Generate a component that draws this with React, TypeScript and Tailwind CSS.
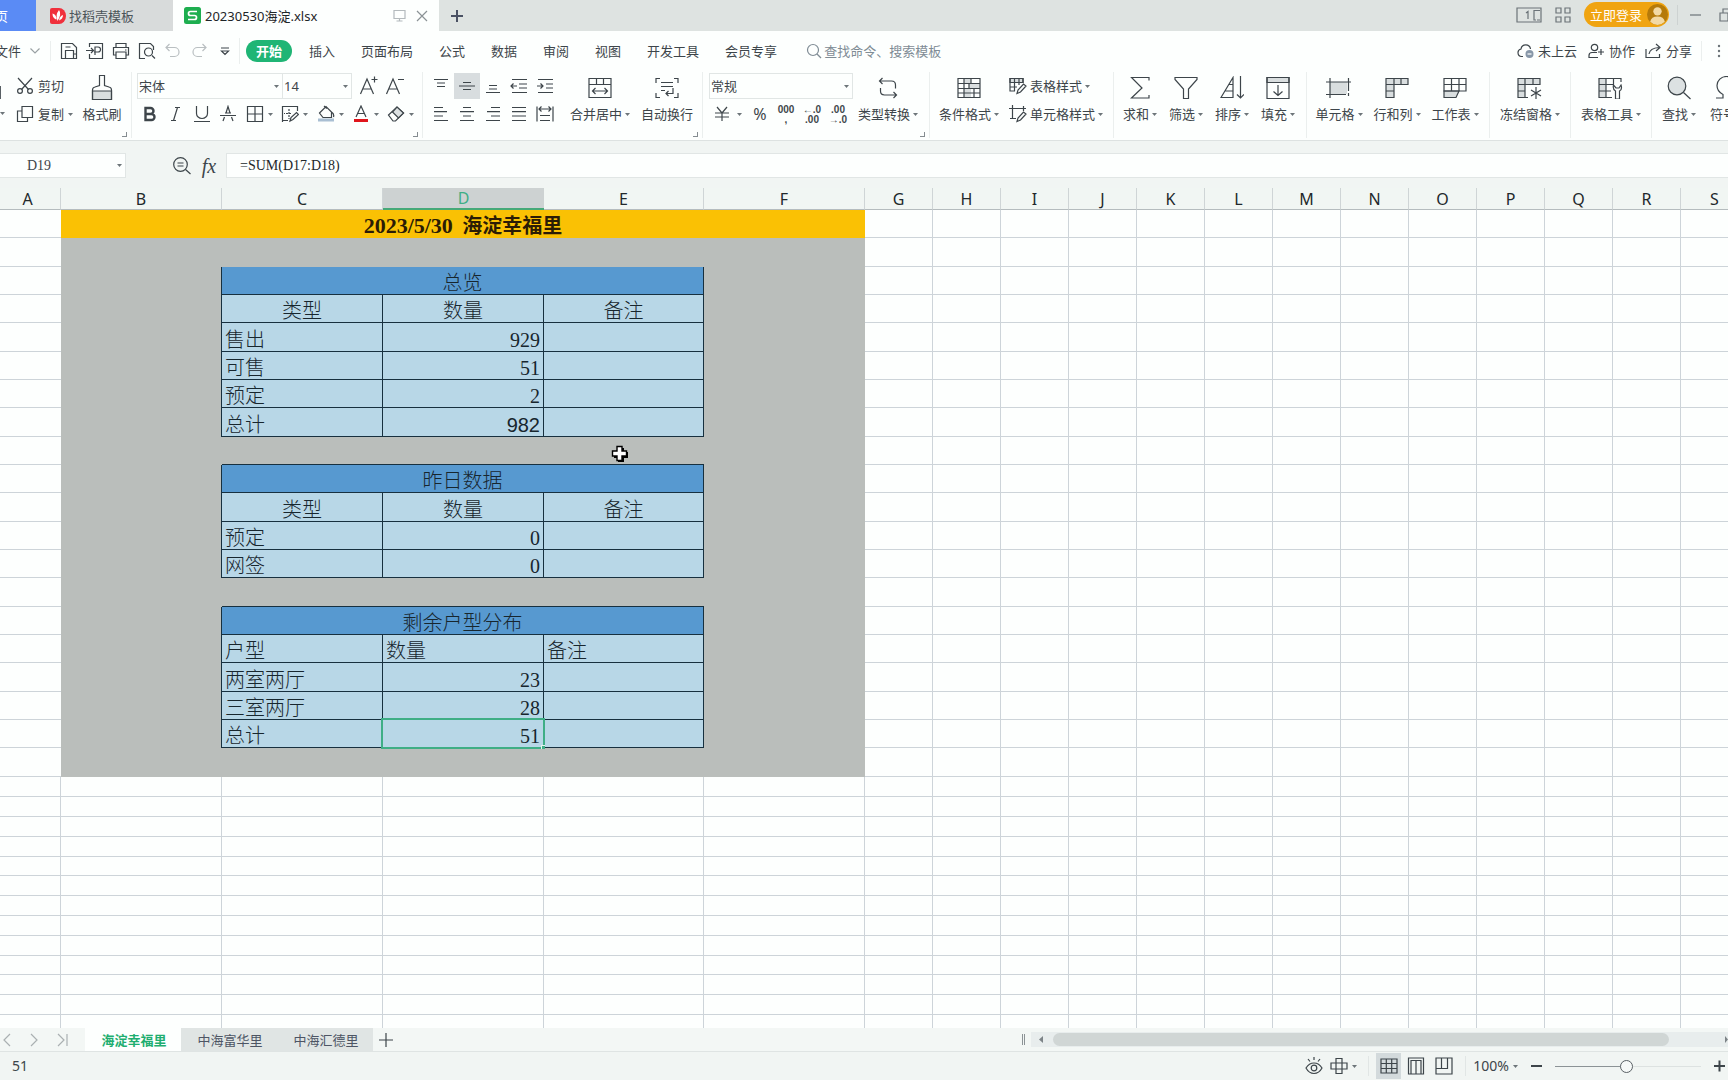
import {useState, type ReactNode} from 'react';
import clsx from 'clsx';

const UI = "font-['Noto_Sans','Noto_Sans_CJK_SC',sans-serif]";
const SONG = "font-['Liberation_Serif','Noto_Sans_CJK_SC',serif]";

function Icon({w = 18, h = 18, children, className}: {w?: number; h?: number; children: ReactNode; className?: string}) {
  return (
    <svg
      width={w}
      height={h}
      viewBox={`0 0 ${w} ${h}`}
      fill="none"
      stroke="currentColor"
      strokeWidth="1.2"
      className={clsx('shrink-0', className)}
      aria-hidden="true"
    >
      {children}
    </svg>
  );
}

const Caret = () => (
  <svg width="5" height="3" viewBox="0 0 5 3" className="shrink-0 fill-[#6d7579]" aria-hidden="true">
    <path d="M0 0h5L2.5 3z" />
  </svg>
);

const icons = {
  save: <Icon><path d="M1.500 1.500h11l4 4v11h-15zM5.500 16V8.500h8V16M5.500 5h5M13.500 12h3" /></Icon>,
  exportPdf: <Icon><path d="M3.500 5V1.500h13v15h-13V12M0 8.500h7M5 6l2.500 2.500L5 11M9 13V5h3a2 2 0 0 1 0 5H8" /></Icon>,
  print: <Icon><path d="M4 5.500v-4h10v4M4 13H1.500V5.500h15V13H14M4 10h10v6.500H4zM13 8h1.500" /></Icon>,
  preview: <Icon><path d="M7 16.500H1.500v-15h11l3 3V8M14 13.500l3 3" /><circle cx="10.500" cy="10" r="4" /></Icon>,
  undo: <Icon><path d="M5.500 2L2 5.500 5.500 9M2 5.500h8.500a4.500 4.500 0 0 1 0 9H6" /></Icon>,
  redo: <Icon><path d="M12.500 2L16 5.500 12.500 9M16 5.500H7.500a4.500 4.500 0 0 0 0 9H12" /></Icon>,
  more: <Icon w={10} h={10}><path d="M1 2h8M1.500 5h7L5 8.500z" /></Icon>,
  cut: <Icon><path d="M2 1l10.500 11.500M16 1L5.500 12.500" /><circle cx="4" cy="14" r="2.400" /><circle cx="14" cy="14" r="2.400" /></Icon>,
  copy: <Icon><path d="M6 1.500h10.500v11H6zM6 6H1.500v10.500h10v-4" /></Icon>,
  brush: (
    <Icon w={22} h={26}>
      <path d="M1.500 16h19v8.500h-19z" fill="#d9dedf" />
      <path d="M1.500 24.500V15q0-2.500 2.500-3l4.500-1.500v-10h5v10L18 12q2.500.500 2.500 3v9.500z" />
    </Icon>
  ),
  fontUp: <Icon w={20} h={20}><path d="M1.500 18L8 3l6.500 15M4 13h8M12.500 3.500h6M15.500.500v6" /></Icon>,
  fontDown: <Icon w={20} h={20}><path d="M1.500 18L8 3l6.500 15M4 13h8M13 3.500h6" /></Icon>,
  bold: <Icon w={14} h={16}><path d="M2.500 2h5a3 3 0 0 1 0 6h-5zM2.500 8h6a3 3 0 0 1 0 6h-6z" strokeWidth="2.400" /></Icon>,
  italic: <Icon w={12} h={16}><path d="M5 1.500h5M1 14.500h5M7.500 1.500l-4 13" /></Icon>,
  underline: <Icon w={16} h={18}><path d="M2.500 1v7.500a5.500 5 0 0 0 11 0V1M0 16.500h16" /></Icon>,
  strike: <Icon w={16} h={18}><path d="M3 16l1.500-4M6 8L8 1.500 10 8M11.500 12l1.500 4M0 10.500h16M5 8h6" /></Icon>,
  border: <Icon><path d="M1.500 1.500h15v15h-15zM9 1.500v15M1.500 9h15" /></Icon>,
  drawBorder: <Icon><path d="M7 15.500H1.500v-14h15V6M1.500 15.500v1.500" /><path d="M5 8.500h6M8 4v8M3 8.500h1M8 13v1" strokeDasharray="2 1" /><path d="M9 16l1-3.500 5.500-5 2 2-5.500 5z" /></Icon>,
  fill: <Icon><path d="M1 13.500h16v3H1z" fill="#a9bfd3" stroke="none" /><path d="M2.500 8L9 1.500 14.500 7v5.500H6zM7 1l3 2.500M14.500 7q3 2 2 5" /></Icon>,
  fontColor: <Icon><path d="M4 12L9 1l5 11M6 8.500h6" /><path d="M2 14h14v3H2z" fill="#e0161c" stroke="none" /></Icon>,
  eraser: <Icon><path d="M1.500 10L10 2l6.500 6-8 8H6z" /><path d="M5.500 7l6 6 5-5L10 2z" fill="#dce1e2" /></Icon>,
  top: <Icon w={16}><path d="M1 2.500h14M4 6h8M4 9.500h8" /></Icon>,
  middle: <Icon w={16}><path d="M4 5.500h8M0 9h16M4 12.500h8" /></Icon>,
  bottom: <Icon w={16}><path d="M4 8.500h8M4 12h8M1 15.500h14" /></Icon>,
  outdent: <Icon><path d="M2 2.500h15M9 7h8M9 11h8M2 15.500h15M7 9H1M3.500 6.500L1 9l2.500 2.500" /></Icon>,
  indent: <Icon><path d="M2 2.500h15M10 7h7M10 11h7M2 15.500h15M1 9h6M4.500 6.500L7 9l-2.500 2.500" /></Icon>,
  left: <Icon w={16}><path d="M1 2.500h9M1 6.700h13M1 11h9M1 15.500h14" /></Icon>,
  center: <Icon w={16}><path d="M4 2.500h8M1 6.700h14M4 11h8M1 15.500h14" /></Icon>,
  right: <Icon w={16}><path d="M6 2.500h9M2 6.700h13M6 11h9M1 15.500h14" /></Icon>,
  justify: <Icon w={16}><path d="M1 2.500h14M1 6.700h14M1 11h14M1 15.500h14" /></Icon>,
  distribute: <Icon><path d="M1 1.500v15M17 1.500v15M3 4h12M5.500 1.500L3 4l2.500 2.500M12.500 1.500L15 4l-2.500 2.500M4 10.500h10M4 15.500h10" /></Icon>,
  merge: <Icon w={24} h={22}><path d="M1 1.500h22v19H1zM1 7.500h22M8.500 1.500v6M15.500 1.500v6M4.500 14h15M7.500 11l-3 3 3 3M16.500 11l3 3-3 3" /></Icon>,
  wrap: <Icon w={24} h={22}><path d="M5 1.500H1V6M19 1.500h4V6M5 20.500H1V16M19 20.500h4V16M6 5.500h12M6 9.500h12M6 13.500h4M18 11v5.500h-7M13.500 14L11 16.500l2.500 2.500" /></Icon>,
  convert: <Icon w={20} h={22}><path d="M4.500 1L1.500 4l3 3M1.500 4h12q4 0 4 4v3.500M15.500 21l3-3-3-3M18.500 18h-12q-4 0-4-4v-3" /></Icon>,
  condition: (
    <Icon w={24} h={22}>
      <path d="M7 1.500h7v5H7zM12 6.500h11v5H12zM7 11.500h7v9H7z" fill="#d9dedf" stroke="none" />
      <path d="M1 1.500h22v19H1zM1 6.500h22M1 11.500h22M1 16h22M7 1.500v19M14 1.500v5M12 6.500v5M17 11.500v9" />
    </Icon>
  ),
  tableStyle: <Icon><path d="M1 1.500h13v4H1z" fill="#d9dedf" /><path d="M6 14H1V1.500h13V6M1 5.500h13M1 10h7M5.500 1.500V14M10 1.500V8M8 16.500l1-3.500 5.500-6 2.500 2-5.500 6z" /></Icon>,
  cellStyle: <Icon><path d="M3.500 0v14M0 3.500h17M14.500 1v5M1 13.500h6M8 16.500l1-3.500 5.500-6 2.500 2-5.500 6z" /></Icon>,
  sum: <Icon w={20} h={22}><path d="M19 3.500v-3H1.500L12 11 1.500 21H19v-3" /></Icon>,
  filter: <Icon w={24} h={24}><path d="M1 1.500h22v2L14.500 13v9.500h-5V13L1 3.500z" /></Icon>,
  sort: <Icon w={24} h={24}><path d="M1 21.500L13 1.500v20zM9 8.500h4M5.500 15h7.500" /><path d="M20.500 0v22M17 18.500l3.500 3.500 3.500-3.500" /></Icon>,
  fillDown: <Icon w={24} h={24}><path d="M1 1.500h22v5H1z" fill="#d9dedf" /><path d="M1 1.500h22v21H1zM12 9v10.500M7.500 15.500l4.500 4 4.500-4" /></Icon>,
  cell: <Icon w={26} h={22}><path d="M4 5h17v12H4z" fill="#d9dedf" stroke="none" /><path d="M4 1v20M0 5h25M22.500 1v13M0 17.500h20M22.500 16v3" /></Icon>,
  rowCol: <Icon w={24} h={22}><path d="M1 1.500h22v6H9v13H1z" fill="#d9dedf" /><path d="M9 1.500v6M16 1.500v6M1 7.500h8M1 14h8" /></Icon>,
  sheet: <Icon w={24} h={22}><path d="M1 14h15l-3 6.500H1z" fill="#d9dedf" /><path d="M1 1.500h22V14H1zM8.500 1.500V14M16 1.500V14M1 7.500h22" /></Icon>,
  freeze: (
    <Icon w={26} h={22}>
      <path d="M1 1.500h22v6H8v13H1z" fill="#d9dedf" />
      <path d="M8 1.500v6M16 1.500v6M1 7.500h7M1 14h7M8 20.500h3M19 10v12M14 13l10 6M24 13l-10 6" />
    </Icon>
  ),
  tools: <Icon w={26} h={22}><path d="M1 1.500h7v19H1z" fill="#d9dedf" stroke="none" /><path d="M14 20.500H1v-19h22V5M1 7.500h14M1 14h12M8 1.500v19M15.500 1.500V8M17.500 22v-8q-3-1.500-2-6l2.500 3h3l2-3q1.500 4.500-1.500 6v8z" /></Icon>,
  find: <Icon w={24} h={24}><circle cx="10" cy="10" r="8.800" fill="#dce1e2" /><path d="M16.500 16.500l7 6.500" /></Icon>,
  symbol: <Icon w={24} h={24}><path d="M1 22h7v-3.500q-6-3-6-9a9.500 9 0 0 1 19 0q0 6-6 9V22h7" /></Icon>,
};

function IconButton({name, label, caret, active, className}: {name: keyof typeof icons; label: string; caret?: boolean; active?: boolean; className?: string}) {
  return (
    <button
      type="button"
      aria-label={label}
      className={clsx('flex h-[26px] shrink-0 items-center justify-center gap-1', active && 'bg-[#d8dddf]', className ?? 'w-[26px]')}
    >
      {icons[name]}
      {caret && <Caret />}
    </button>
  );
}

function BigButton({name, label, caret = true, className}: {name: keyof typeof icons; label: string; caret?: boolean; className: string}) {
  return (
    <button type="button" className={clsx('flex shrink-0 flex-col items-center', className)}>
      <span className="flex h-[30px] items-center">{icons[name]}</span>
      <span className="flex h-[22px] items-center gap-[3px] whitespace-nowrap">
        {label}
        {caret && <Caret />}
      </span>
    </button>
  );
}

function Group({className, corner, children}: {className: string; corner?: boolean; children: ReactNode}) {
  return (
    <div className={clsx('relative flex h-[66px] shrink-0 border-r border-[#ebefee] pt-px', className)}>
      {children}
      {corner && <span className="absolute right-1 bottom-px size-[5px] border-r border-b border-[#858c90]" />}
    </div>
  );
}

function Picker({label, options, className}: {label: string; options: string[]; className: string}) {
  return (
    <label className={clsx('relative flex h-[26px] items-center border border-[#e1e6e5]', className)}>
      <select aria-label={label} className="size-full appearance-none pl-px outline-none">
        {options.map((o) => (
          <option key={o}>{o}</option>
        ))}
      </select>
      <span className="pointer-events-none absolute right-[3px] flex">
        <Caret />
      </span>
    </label>
  );
}

function TitleBar() {
  return (
    <div className="flex h-[31px] shrink-0 items-center bg-[#dee3e1] text-[#4b5459]">
      <button type="button" className="flex h-full w-9 shrink-0 items-center justify-end overflow-hidden bg-[#5a8bf5] pr-7 whitespace-nowrap text-white">
        首页
      </button>
      <button type="button" className="flex h-full w-[137px] shrink-0 items-center gap-[3px] bg-[#d8dbdb] pl-[14px]">
        <svg width="16" height="16" viewBox="0 0 16 16" aria-hidden="true">
          <path d="M2 0h7a7 8 0 0 1 0 16H2q-2 0-2-2V2q0-2 2-2z" fill="#f0303c" />
          <path d="M6 11.500Q2.500 10 2.500 5.500q4 1 4 6zM7.500 13Q5 7 9 2q3 4-1.500 11zM9 12.500q.500-4.500 4-5.500 0 4-4 5.500z" fill="#fff" />
        </svg>
        找稻壳模板
      </button>
      <div className="flex h-full w-[266px] shrink-0 items-center bg-[#fdfffe] pl-[11px] text-[#1e2528]">
        <svg width="17" height="17" viewBox="0 0 17 17" aria-hidden="true">
          <rect width="17" height="17" rx="2.500" fill="#1dae4f" />
          <path d="M13 4.500H6.500a2 2 0 0 0 0 4h4a2 2 0 0 1 0 4H4" fill="none" stroke="#fff" strokeWidth="1.700" />
        </svg>
        <span className="ml-1 flex-1 whitespace-nowrap">20230530海淀.xlsx</span>
        <Icon w={13} h={13} className="mr-[10px] text-[#b4babd]"><path d="M1 1.500h11v8H1zM3.500 12h6M6.500 9.500V12" /></Icon>
        <button type="button" aria-label="关闭" className="mr-[11px] text-[#8b9296]">
          <Icon w={12} h={12}><path d="M1 1l10 10M11 1L1 11" /></Icon>
        </button>
      </div>
      <button type="button" aria-label="新建" className="ml-3 text-[#4a5163]">
        <Icon w={12} h={12}><path d="M6 0v12M0 6h12" strokeWidth="2" /></Icon>
      </button>
      <div className="ml-auto flex h-full shrink-0 items-center pb-[2px] text-[#6b7378]">
        <Icon w={26} h={16}><path d="M1 1h24v14H1zM10 6l2-1.500V12M24 3.500h-6V13h2M24 13h-3" /></Icon>
        <Icon w={16} h={16} className="ml-[13px]"><path d="M1 1h5v5H1zM10 1h5v5h-5zM1 10h5v5H1zM10 10h5v5h-5z" /></Icon>
        <button type="button" className="ml-[13px] flex h-[25px] w-[85px] items-center gap-[5px] rounded-full bg-[#f0a411] pl-[6px] whitespace-nowrap text-white">
          立即登录
          <svg width="21" height="21" viewBox="0 0 20 20" aria-hidden="true">
            <circle cx="10" cy="10" r="10" fill="#b57a0a" />
            <circle cx="10" cy="7" r="4" fill="#f3d9a4" />
            <path d="M3 17q1-5 7-5t7 5q-3 3-7 3t-7-3z" fill="#f3d9a4" />
          </svg>
        </button>
        <span className="ml-2 h-5 w-px bg-[#cdd2d1]" />
        <button type="button" aria-label="最小化" className="ml-3">
          <Icon w={12} h={12}><path d="M0 6h11" /></Icon>
        </button>
        <button type="button" aria-label="还原" className="ml-[17px] w-[9px] overflow-hidden">
          <Icon w={14} h={14}><path d="M1 5h8v8H1zM4 5V1h9v8H9" /></Icon>
        </button>
      </div>
    </div>
  );
}

const MENU = ['插入', '页面布局', '公式', '数据', '审阅', '视图', '开发工具', '会员专享'];

function MenuBar() {
  return (
    <div className="flex h-[41px] shrink-0 items-center pb-[2px]">
      <button type="button" className="flex w-[51px] shrink-0 items-center justify-end gap-[9px] overflow-hidden border-r border-[#ebefee] pr-[10px] whitespace-nowrap">
        文件
        <Icon w={10} h={6} className="text-[#9aa1a4]"><path d="M.500 .500L5 5 9.500 .500" /></Icon>
      </button>
      <div className="flex w-[189px] shrink-0 items-center border-r border-[#ebefee] pl-[5px]">
        <IconButton name="save" label="保存" />
        <IconButton name="exportPdf" label="输出为PDF" />
        <IconButton name="print" label="打印" />
        <IconButton name="preview" label="打印预览" />
        <IconButton name="undo" label="撤销" className="w-[26px] text-[#b9bfc1]" />
        <IconButton name="redo" label="恢复" className="w-[26px] text-[#b9bfc1]" />
        <IconButton name="more" label="自定义快速访问" />
      </div>
      <button type="button" className="ml-[6px] h-[22px] w-[46px] shrink-0 rounded-full bg-[#1fb575] leading-[22px] font-bold text-white">开始</button>
      <nav className="ml-[17px] flex shrink-0 gap-[26px]">
        {MENU.map((m) => (
          <button type="button" key={m}>{m}</button>
        ))}
      </nav>
      <label className="ml-[29px] flex items-center gap-[2px] text-[#7f8c95]">
        <Icon w={16} h={16}><circle cx="7" cy="7" r="5.500" /><path d="M11 11l4 4" /></Icon>
        <input placeholder="查找命令、搜索模板" className="w-40 outline-none placeholder:text-[#7f8c95]" />
      </label>
      <div className="ml-auto flex shrink-0 items-center">
        <button type="button" className="flex items-center gap-1">
          <Icon w={17} h={16}><path d="M6 13.500H4.500a3.800 3.800 0 0 1-.500-7.500 4.800 4.800 0 0 1 9.500 0" /><circle cx="12.500" cy="11" r="4" fill="#8797a8" stroke="none" /><path d="M10.500 11h4" stroke="#fff" /></Icon>
          未上云
        </button>
        <button type="button" className="ml-[11px] flex items-center gap-[5px]">
          <Icon w={16} h={16}><circle cx="6.500" cy="4.500" r="3.200" /><path d="M10 14.500H1v-2q0-3 3-3h5M13 6v6M10 9h6" /></Icon>
          协作
        </button>
        <button type="button" className="ml-[10px] flex items-center gap-[5px]">
          <Icon w={16} h={16}><path d="M1 6v8.500h13.500V11M4 11q1-6 10-6.500M11 1l4 3.500L11 8" /></Icon>
          分享
        </button>
        <span className="ml-[9px] h-5 w-px bg-[#ebefee]" />
        <button type="button" aria-label="更多" className="mr-[7px] ml-[15px]">
          <svg width="4" height="14" className="fill-[#6b7378]" aria-hidden="true">
            <circle cx="2" cy="2" r="1.200" /><circle cx="2" cy="7" r="1.200" /><circle cx="2" cy="12" r="1.200" />
          </svg>
        </button>
      </div>
    </div>
  );
}

const DECIMAL = "w-[26px] pt-px text-center font-['Liberation_Sans',sans-serif] text-[10px] leading-[10px] font-bold whitespace-nowrap";

function Ribbon() {
  return (
    <div className="flex h-[69px] shrink-0 overflow-hidden border-b border-[#dde2e1]">
      <Group className="w-[132px]" corner>
        <button type="button" aria-label="粘贴" className="flex w-[16px] flex-col">
          <span className="mt-[13px] h-[13px] w-px bg-[#596065]" />
          <span className="mt-[13px] flex"><Caret /></span>
        </button>
        <div className="flex w-[60px] flex-col gap-[2px]">
          <button type="button" className="flex h-[26px] items-center gap-1 whitespace-nowrap">{icons.cut}剪切</button>
          <button type="button" className="flex h-[26px] items-center gap-1 whitespace-nowrap">{icons.copy}复制<Caret /></button>
        </div>
        <BigButton name="brush" label="格式刷" caret={false} className="w-[52px]" />
      </Group>

      <Group className="w-[291px] flex-col gap-[2px] pl-[5px]" corner>
        <div className="flex items-center">
          <Picker label="字体" options={['宋体', '黑体', '楷体']} className="w-[146px]" />
          <Picker label="字号" options={['14', '12', '11', '10']} className="w-[69px] border-l-0" />
          <IconButton name="fontUp" label="增大字号" className="ml-1 w-[26px]" />
          <IconButton name="fontDown" label="减小字号" />
        </div>
        <div className="flex">
          <IconButton name="bold" label="加粗" />
          <IconButton name="italic" label="倾斜" />
          <IconButton name="underline" label="下划线" />
          <IconButton name="strike" label="删除线" />
          <IconButton name="border" label="边框" caret className="w-9" />
          <IconButton name="drawBorder" label="绘图边框" caret className="w-[35px]" />
          <IconButton name="fill" label="填充颜色" caret className="w-9" />
          <IconButton name="fontColor" label="字体颜色" caret className="w-[35px]" />
          <IconButton name="eraser" label="清除" caret className="w-[35px]" />
        </div>
      </Group>

      <Group className="w-[280px] pl-[5px]" corner>
        <div className="flex w-[137px] flex-col gap-[2px]">
          <div className="flex">
            <IconButton name="top" label="顶端对齐" />
            <IconButton name="middle" label="垂直居中" active />
            <IconButton name="bottom" label="底端对齐" />
            <IconButton name="outdent" label="减少缩进量" />
            <IconButton name="indent" label="增加缩进量" />
          </div>
          <div className="flex">
            <IconButton name="left" label="左对齐" />
            <IconButton name="center" label="水平居中" />
            <IconButton name="right" label="右对齐" />
            <IconButton name="justify" label="两端对齐" />
            <IconButton name="distribute" label="分散对齐" />
          </div>
        </div>
        <BigButton name="merge" label="合并居中" className="w-[70px]" />
        <BigButton name="wrap" label="自动换行" caret={false} className="w-[64px]" />
      </Group>

      <Group className="w-[227px] pl-[6px]" corner>
        <div className="flex w-[144px] flex-col gap-[2px]">
          <Picker label="数字格式" options={['常规', '数值', '货币', '日期']} className="w-full" />
          <div className="flex h-[26px] items-center text-[#3f474b]">
            <button type="button" aria-label="货币" className="flex w-[38px] items-center justify-center gap-2">
              <Icon w={14} h={16}><path d="M2 1l5 6 5-6M0 7h14M0 11h14M7 7v8" /></Icon>
              <Caret />
            </button>
            <button type="button" aria-label="百分比" className="flex w-[26px] items-center justify-center text-base">%</button>
            <button type="button" aria-label="千位分隔" className={DECIMAL}>000<br />,</button>
            <button type="button" aria-label="增加小数位数" className={DECIMAL}>←.0<br />.00</button>
            <button type="button" aria-label="减少小数位数" className={DECIMAL}>.00<br />→.0</button>
          </div>
        </div>
        <BigButton name="convert" label="类型转换" className="w-[70px]" />
      </Group>

      <Group className="w-[184px] pl-[3px]">
        <BigButton name="condition" label="条件格式" className="w-[72px]" />
        <div className="ml-[4px] flex flex-col gap-[2px]">
          <button type="button" className="flex h-[26px] items-center gap-[3px] whitespace-nowrap">{icons.tableStyle}表格样式<Caret /></button>
          <button type="button" className="flex h-[26px] items-center gap-[3px] whitespace-nowrap">{icons.cellStyle}单元格样式<Caret /></button>
        </div>
      </Group>

      <Group className="w-[193px] pl-[3px]">
        <BigButton name="sum" label="求和" className="w-[46px]" />
        <BigButton name="filter" label="筛选" className="w-[46px]" />
        <BigButton name="sort" label="排序" className="w-[46px]" />
        <BigButton name="fillDown" label="填充" className="w-[46px]" />
      </Group>

      <Group className="w-[183px] pl-[3px]">
        <BigButton name="cell" label="单元格" className="w-[58px]" />
        <BigButton name="rowCol" label="行和列" className="w-[58px]" />
        <BigButton name="sheet" label="工作表" className="w-[58px]" />
      </Group>

      <Group className="w-[81px] pl-[4px]">
        <BigButton name="freeze" label="冻结窗格" className="w-[72px]" />
      </Group>
      <Group className="w-[81px] pl-[4px]">
        <BigButton name="tools" label="表格工具" className="w-[72px]" />
      </Group>
      <div className="flex pt-px pl-[4px]">
        <BigButton name="find" label="查找" className="w-[46px]" />
        <BigButton name="symbol" label="符号" className="w-[50px]" />
      </div>
    </div>
  );
}

function FormulaBar() {
  return (
    <div className="flex h-[47px] shrink-0 items-center bg-[#f1f5f3] pt-[2px]">
      <div className="flex h-[25px] w-[126px] shrink-0 items-center border border-l-0 border-[#e1e6e5] bg-[#fdfffe] pr-[3px]">
        <input aria-label="名称框" defaultValue="D19" className={clsx(SONG, 'w-20 flex-1 pl-[27px] text-sm outline-none')} />
        <Caret />
      </div>
      <Icon w={19} h={19} className="ml-[46px]"><circle cx="8.500" cy="8.500" r="6.800" /><path d="M13.500 13.500l5 4.500M5.500 7h6M5.500 10h6" /></Icon>
      <button type="button" aria-label="插入函数" className="ml-[9px] w-[18px] font-['Liberation_Serif',serif] text-xl leading-6 italic">fx</button>
      <input
        aria-label="编辑栏"
        defaultValue="=SUM(D17:D18)"
        className={clsx(SONG, 'ml-2 h-[25px] min-w-0 flex-1 border border-r-0 border-[#e1e6e5] bg-[#fdfffe] pl-[13px] text-sm text-[#22282b] outline-none')}
      />
    </div>
  );
}

type Row =
  | {kind: 'title' | 'gap' | 'lastGap'}
  | {kind: 'band'; text: string}
  | {kind: 'head'; cells: string[]; start?: boolean}
  | {kind: 'data'; name: string; value: number; plain?: boolean; active?: boolean};

const ROWS: Row[] = [
  {kind: 'title'},
  {kind: 'lastGap'},
  {kind: 'band', text: '总览'},
  {kind: 'head', cells: ['类型', '数量', '备注']},
  {kind: 'data', name: '售出', value: 929},
  {kind: 'data', name: '可售', value: 51},
  {kind: 'data', name: '预定', value: 2},
  {kind: 'data', name: '总计', value: 982, plain: true},
  {kind: 'gap'},
  {kind: 'band', text: '昨日数据'},
  {kind: 'head', cells: ['类型', '数量', '备注']},
  {kind: 'data', name: '预定', value: 0},
  {kind: 'data', name: '网签', value: 0},
  {kind: 'gap'},
  {kind: 'band', text: '剩余户型分布'},
  {kind: 'head', cells: ['户型', '数量', '备注'], start: true},
  {kind: 'data', name: '两室两厅', value: 23},
  {kind: 'data', name: '三室两厅', value: 28},
  {kind: 'data', name: '总计', value: 51, active: true},
  {kind: 'lastGap'},
];

const REST = 'GHIJKLMNOPQRS'.split('');
const COLS = ['A', 'B', 'C', 'D', 'E', 'F', ...REST];
const COL_WIDTHS = ['w-[61px]', 'w-[161px]', 'w-[161px]', 'w-[161px]', 'w-[160px]', 'w-[161px]'];

const LINE = 'border-r border-b border-[#cdd4d9]';
const GRAY = 'bg-[#babebb]';
const TEXT = 'align-bottom leading-[22px] font-light';
const BOX = 'border-r border-b border-[#17303f] bg-[#b8d7e7]';

function rowCells(row: Row) {
  switch (row.kind) {
    case 'title':
      return (
        <td colSpan={5} className="bg-[#fac104] text-center align-bottom leading-6 font-bold text-[#2b1c05]">
          <span className="mr-1 text-[22px] leading-6">2023/5/30 </span>
          海淀幸福里
        </td>
      );
    case 'gap':
      return (
        <>
          <td className={GRAY} />
          <td colSpan={3} className={clsx(GRAY, 'border-b border-[#17303f]')} />
          <td className={GRAY} />
        </>
      );
    case 'lastGap':
      return <td colSpan={5} className={GRAY} />;
    case 'band':
      return (
        <>
          <td className={clsx(GRAY, 'border-r border-[#17303f]')} />
          <td colSpan={3} className={clsx(TEXT, 'border-r border-b border-[#17303f] bg-[#5799d0] text-center')}>{row.text}</td>
          <td className={GRAY} />
        </>
      );
    case 'head':
      return (
        <>
          <td className={clsx(GRAY, 'border-r border-[#17303f]')} />
          {row.cells.map((c) => (
            <td key={c} className={clsx(BOX, TEXT, row.start ? 'pl-[3px]' : 'text-center')}>{c}</td>
          ))}
          <td className={GRAY} />
        </>
      );
    case 'data':
      return (
        <>
          <td className={clsx(GRAY, 'border-r border-[#17303f]')} />
          <td className={clsx(BOX, TEXT, 'pl-[3px]')}>{row.name}</td>
          <td className={clsx(BOX, TEXT, 'relative pr-[3px] text-right', row.plain && "font-['Liberation_Sans',sans-serif]")}>
            {row.value}
            {row.active && (
              <span className="absolute -inset-[2px] z-10 border-2 border-[#3fae86]">
                <span className="absolute -right-[2px] -bottom-[2px] size-1 border-t border-l border-[#e7f5ee] bg-[#3fae86]" />
              </span>
            )}
          </td>
          <td className={BOX} />
          <td className={GRAY} />
        </>
      );
  }
}

function Sheet() {
  return (
    <main className="relative min-h-0 flex-1 overflow-hidden bg-[#fdfffe]">
      <table className={clsx(SONG, 'w-max table-fixed border-separate border-spacing-0 text-[20px] text-[#17262e]')}>
        <colgroup>
          {COLS.map((c, i) => (
            <col key={c} className={COL_WIDTHS[i] ?? 'w-[68px]'} />
          ))}
        </colgroup>
        <thead>
          <tr className="h-[22px]">
            {COLS.map((c, i) => (
              <th
                key={c}
                scope="col"
                className={clsx(
                  UI,
                  'p-0 text-base leading-5 font-normal',
                  c === 'D'
                    ? 'border-b-2 border-[#46a978] bg-[#cdd2d2] text-[#3fae86]'
                    : 'border-b border-b-[#b5bcbe] bg-[#f1f6f3] text-[#22282b]',
                  c !== 'D' && 'border-r border-r-[#cfd5d6]',
                  c === 'A' && 'pr-[5px]',
                  COL_WIDTHS[i] ?? 'w-[68px]',
                )}
              >
                {c}
              </th>
            ))}
          </tr>
        </thead>
        <tbody>
          {ROWS.map((row, i) => (
            <tr key={i} className={i % 3 === 1 ? 'h-[29px]' : 'h-7'}>
              <td className="border-b border-[#cdd4d9]" />
              {rowCells(row)}
              {REST.map((c) => (
                <td key={c} className={LINE} />
              ))}
            </tr>
          ))}
          {Array.from({length: 40}, (_, i) => (
            <tr key={i} className={i % 5 === 4 ? 'h-[19px]' : 'h-5'}>
              {COLS.map((c) => (
                <td key={c} className={LINE} />
              ))}
            </tr>
          ))}
        </tbody>
      </table>
      {/* cell-select mouse pointer */}
      <svg width="18" height="18" viewBox="0 0 18 18" className="pointer-events-none absolute top-[257px] left-[611px]" aria-hidden="true">
        <path d="M7 3h6v4h4v6h-4v4H7v-4H3V7h4z" fill="#000" />
        <path d="M6 1.500h5V6h4.500v5H11v4.500H6V11H1.500V6H6z" fill="#fff" stroke="#000" strokeWidth="1.400" />
      </svg>
    </main>
  );
}

const SHEETS = ['海淀幸福里', '中海富华里', '中海汇德里'];

function SheetTabs() {
  const [current, setCurrent] = useState(SHEETS[0]);
  return (
    <div className="flex h-6 shrink-0 items-center border-b border-[#dfe4e3] bg-[#f3f7f5]">
      <div className="flex w-[85px] shrink-0 items-center gap-[19px] pl-[3px] text-[#aab0b2]">
        <Icon w={8} h={14}><path d="M7 1L1 7l6 6" /></Icon>
        <Icon w={8} h={14}><path d="M1 1l6 6-6 6" /></Icon>
        <Icon w={11} h={14}><path d="M1 1l6 6-6 6M10 1v12" /></Icon>
      </div>
      {SHEETS.map((s) => (
        <button
          type="button"
          key={s}
          onClick={() => setCurrent(s)}
          className={clsx('h-full w-24 shrink-0 pl-[2px] whitespace-nowrap', s === current ? 'bg-[#fdfffe] font-bold text-[#1fae70]' : 'bg-[#e0e5e4] text-[#4d5564]')}
        >
          {s}
        </button>
      ))}
      <button type="button" aria-label="新建工作表" className="ml-[6px]">
        <Icon w={14} h={14}><path d="M7 0v14M0 7h14" /></Icon>
      </button>
      <div className="ml-auto flex w-[41%] items-center">
        <span className="ml-[2px] h-[11px] w-[3px] border-x border-[#8c9396]" />
        <div className="ml-[6px] flex h-[15px] flex-1 items-center bg-[#e8eded] pl-2">
          <svg width="4" height="7" className="fill-[#7d8488]" aria-hidden="true"><path d="M4 0v7L0 3.500z" /></svg>
          <span className="mr-14 ml-[10px] h-[13px] flex-1 rounded-full bg-[#d0d6d5]" />
          <svg width="3" height="7" className="fill-[#7d8488]" aria-hidden="true"><path d="M0 0v7l3-3.500z" /></svg>
        </div>
      </div>
    </div>
  );
}

function StatusBar() {
  return (
    <footer className="flex h-7 shrink-0 items-center bg-[#f1f5f3] pl-3">
      <span className="text-sm">51</span>
      <div className="ml-auto flex shrink-0 items-center">
        <Icon w={18} h={18}><path d="M1 11q3-5 8-5t8 5q-3 5.500-8 5.500T1 11zM9 0v3M3 2l2 2.500M15 2l-2 2.500" /><circle cx="9" cy="11" r="2.800" /></Icon>
        <Icon w={18} h={18} className="mr-[4px] ml-[7px]"><path d="M6 1.500h6v15H6zM1 6h16v6H1z" /></Icon>
        <Caret />
        <span className="ml-[11px] h-5 w-px bg-[#e1e6e5]" />
        <button type="button" aria-label="普通视图" className="ml-[7px] flex h-[26px] w-[25px] items-center justify-center bg-[#d3dadc]">
          <Icon><path d="M1 2h16v14H1zM1 6.500h16M1 11.500h16M6.300 2v14M11.700 2v14" /></Icon>
        </button>
        <button type="button" aria-label="页面布局视图" className="ml-[6px]">
          <Icon><path d="M1.500 1h15v16h-15zM4 3.500h10V17H4zM9 3.500V17" /></Icon>
        </button>
        <button type="button" aria-label="分页预览" className="mr-3 ml-[10px]">
          <Icon><path d="M1 1h16v16H1zM1 11.500h11.500V1M6.500 1v10.500" /></Icon>
        </button>
        <span className="h-5 w-px bg-[#e1e6e5]" />
        <button type="button" className="ml-[7px] flex items-center gap-1 text-sm">100%<Caret /></button>
        <button type="button" aria-label="缩小" className="ml-[13px]">
          <Icon w={11} h={12}><path d="M0 6h11" strokeWidth="2" /></Icon>
        </button>
        <input
          type="range"
          aria-label="显示比例"
          defaultValue={49}
          className="mx-[13px] h-4 w-[146px] appearance-none bg-[linear-gradient(90deg,#8c9396_50%,#dde2e1_50%)] bg-size-[100%_1px] bg-center bg-no-repeat [&::-webkit-slider-thumb]:size-[13px] [&::-webkit-slider-thumb]:appearance-none [&::-webkit-slider-thumb]:rounded-full [&::-webkit-slider-thumb]:border [&::-webkit-slider-thumb]:border-[#596065] [&::-webkit-slider-thumb]:bg-[#f6f9f8]"
        />
        <button type="button" aria-label="放大" className="mr-[3px]">
          <Icon w={11} h={12}><path d="M0 6h11M5.500 .500v11" strokeWidth="2" /></Icon>
        </button>
      </div>
    </footer>
  );
}

export default function App() {
  return (
    <div className={clsx(UI, 'flex h-screen flex-col overflow-hidden bg-[#fdfffe] text-[13px] leading-5 text-[#3d454a]')} lang="zh-CN">
      <TitleBar />
      <MenuBar />
      <Ribbon />
      <FormulaBar />
      <Sheet />
      <SheetTabs />
      <StatusBar />
    </div>
  );
}
